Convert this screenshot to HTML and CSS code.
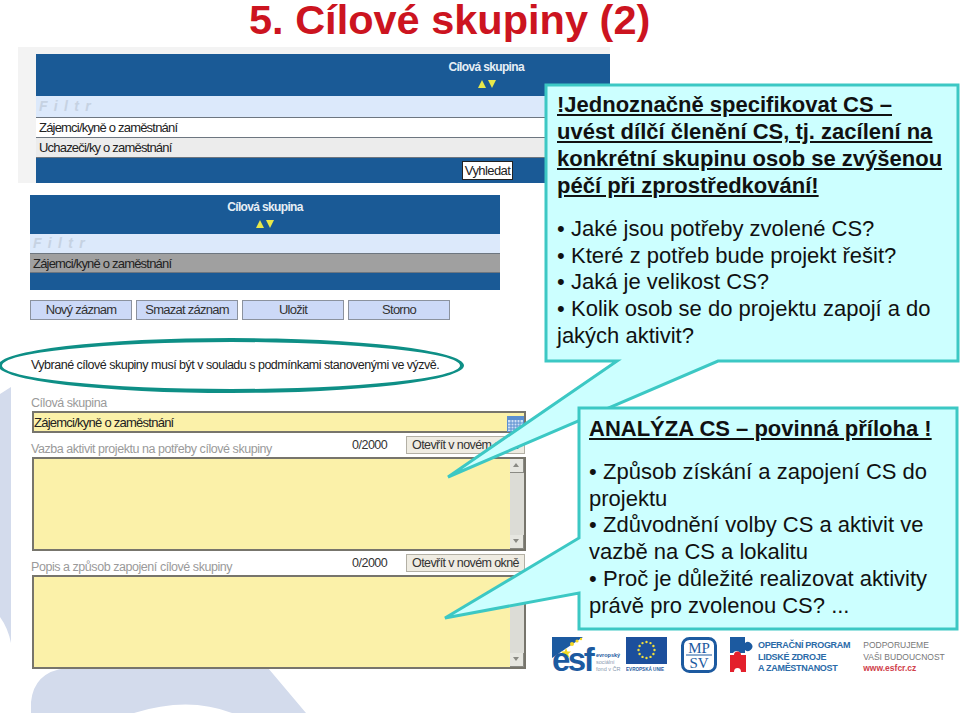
FILE: index.html
```html
<!DOCTYPE html>
<html>
<head>
    <title>5. Cílové skupiny (2)</title>
    <link rel="stylesheet" href="styles.css">
</head>
<body>
    <div class="slide">
        <!-- slide background shapes -->
        <svg class="backdrop" width="960" height="713" viewBox="0 0 960 713">
            <path d="M0,394 L11,387 V643 Q8,628 0,617 Z" fill="#d3dbec"/>
            <path d="M31,713 V702 Q34,672 66,668 H268 L306,713 H232 Q188,696 134,713 Z" fill="#d3dbec"/>
        </svg>

        <h1 class="title">5. Cílové skupiny (2)</h1>

        <div class="first-wrap">
            <div class="list list-first">
                <div class="list-head">
                    <span>Cílová skupina</span>
                    <div class="sort"><i class="up"></i><i class="down"></i></div>
                </div>
                <div class="row-filter">F i l t r</div>
                <div class="row">Zájemci/kyně o zaměstnání</div>
                <div class="row row-alt">Uchazeči/ky o zaměstnání</div>
                <div class="list-foot"><span class="search">Vyhledat</span></div>
            </div>
        </div>

        <div class="list list-second">
            <div class="list-head">
                <span>Cílová skupina</span>
                <div class="sort"><i class="up"></i><i class="down"></i></div>
            </div>
            <div class="row-filter">F i l t r</div>
            <div class="row row-selected">Zájemci/kyně o zaměstnání</div>
            <div class="list-foot"></div>
        </div>

        <div class="actions">
            <span>Nový záznam</span>
            <span>Smazat záznam</span>
            <span>Uložit</span>
            <span>Storno</span>
        </div>

        <div class="note">
            <p>Vybrané cílové skupiny musí být v souladu s podmínkami stanovenými ve výzvě.</p>
            <div class="ring"></div>
        </div>

        <div class="form">
            <div class="label">Cílová skupina</div>
            <div class="input">
                <span>Zájemci/kyně o zaměstnání</span>
                <svg class="calendar" width="17" height="16" viewBox="0 0 17 16">
                    <rect width="17" height="16" fill="#5b8fd0"/>
                    <rect x="1" y="4" width="15" height="11" fill="#cfe0f5"/>
                    <path d="M1,7H16M1,10H16M1,13H16M4,4V15M7,4V15M10,4V15M13,4V15" stroke="#5b8fd0" fill="none"/>
                </svg>
            </div>

            <div class="field-head">
                <div class="label">Vazba aktivit projektu na potřeby cílové skupiny</div>
                <div class="count">0/2000</div>
                <div class="open">Otevřít v novém okně</div>
            </div>
            <div class="area">
                <div class="scroll"><b class="arrow-up"></b><b class="arrow-down"></b></div>
            </div>

            <div class="field-head">
                <div class="label">Popis a způsob zapojení cílové skupiny</div>
                <div class="count">0/2000</div>
                <div class="open">Otevřít v novém okně</div>
            </div>
            <div class="area">
                <div class="scroll"><b class="arrow-up"></b><b class="arrow-down"></b></div>
            </div>
        </div>

        <!-- callouts -->
        <svg class="bubble" width="960" height="713" viewBox="0 0 960 713">
            <path d="M546,85 H958 V361 H718 L448,477 L617,361 H546 Z" fill="#ccffff" stroke="#3cc8c4" stroke-width="3"/>
        </svg>
        <div class="callout callout-top">
            <h2>!Jednoznačně specifikovat CS – uvést dílčí členění CS, tj. zacílení na konkrétní skupinu osob se zvýšenou péčí při zprostředkování!</h2>
            <ul>
                <li>Jaké jsou potřeby zvolené CS?</li>
                <li>Které z potřeb bude projekt řešit?</li>
                <li>Jaká je velikost CS?</li>
                <li class="wrap">Kolik osob se do projektu zapojí a do jakých aktivit?</li>
            </ul>
        </div>

        <svg class="bubble" width="960" height="713" viewBox="0 0 960 713">
            <path d="M579,408 H957 V629 H579 V593 L445,618 L579,538 Z" fill="#ccffff" stroke="#3cc8c4" stroke-width="3"/>
        </svg>
        <div class="callout callout-bottom">
            <h2>ANALÝZA CS – povinná příloha !</h2>
            <ul>
                <li class="wrap">Způsob získání a zapojení CS do projektu</li>
                <li class="wrap">Zdůvodnění volby CS a aktivit ve vazbě na CS a lokalitu</li>
                <li class="wrap">Proč je důležité realizovat aktivity právě pro zvolenou CS? ...</li>
            </ul>
        </div>

        <!-- logos -->
        <div class="logos">
            <svg class="logo-esf" width="70" height="44" viewBox="0 0 70 44">
                <path d="M0,1 H31 L0,22 Z" fill="#1c5aa0"/>
                <path d="M14,12 l1.4,3.4 3.6,.2 -2.8,2.3 .9,3.5 -3.1,-2 -3.1,2 .9,-3.5 -2.8,-2.3 3.6,-.2 Z" fill="#f6d723"/>
                <circle cx="20" cy="8" r="2" fill="#f6d723"/>
                <circle cx="25" cy="5" r="1.6" fill="#f6d723"/>
                <circle cx="29" cy="3" r="1.2" fill="#f6d723"/>
                <text x="0" y="35" class="esf-word">esf</text>
                <text x="44" y="21" class="esf-small esf-strong">evropský</text>
                <text x="44" y="28" class="esf-small">sociální</text>
                <text x="44" y="35" class="esf-small">fond v ČR</text>
            </svg>
            <svg class="logo-eu" width="42" height="38" viewBox="0 0 42 38">
                <rect x="0" y="1" width="41" height="27" fill="#1c4f9c"/>
                <g fill="#f3e03b">
                    <circle cx="20.500" cy="6" r="1.2"/><circle cx="24.500" cy="7.100" r="1.2"/><circle cx="27.400" cy="10" r="1.2"/>
                    <circle cx="28.500" cy="14" r="1.2"/><circle cx="27.400" cy="18" r="1.2"/><circle cx="24.500" cy="20.900" r="1.2"/>
                    <circle cx="20.500" cy="22" r="1.2"/><circle cx="16.500" cy="20.900" r="1.2"/><circle cx="13.600" cy="18" r="1.2"/>
                    <circle cx="12.500" cy="14" r="1.2"/><circle cx="13.600" cy="10" r="1.2"/><circle cx="16.500" cy="7.100" r="1.2"/>
                </g>
                <text x="0" y="35" class="eu-word">EVROPSKÁ UNIE</text>
            </svg>
            <svg class="logo-mpsv" width="36" height="37" viewBox="0 0 36 37">
                <rect x="1.500" y="2.500" width="33" height="33" rx="7" fill="#fff" stroke="#1c5aa0" stroke-width="3"/>
                <path d="M5,19H31" stroke="#1c5aa0"/>
                <text x="18" y="17" class="mpsv-word">MP</text>
                <text x="18" y="32" class="mpsv-word">SV</text>
            </svg>
            <svg class="logo-puzzle" width="24" height="37" viewBox="0 0 24 37">
                <path d="M0,1 H15 V7 A4.500,4.500 0 1 1 15,14 V17 H10 A4,4 0 0 0 3,17 H0 Z" fill="#1c5aa0"/>
                <path d="M0,36 V19 H4 A3.500,3.500 0 0 1 11,19 H16 V36 H11 A3.500,4 0 0 0 4,36 Z" fill="#e3202c"/>
            </svg>
            <div class="op-text">OPERAČNÍ PROGRAM<br>LIDSKÉ ZDROJE<br>A ZAMĚSTNANOST</div>
            <div class="support">PODPORUJEME<br>VAŠI BUDOUCNOST<br><span>www.esfcr.cz</span></div>
        </div>
    </div>
</body>
</html>
```

FILE: styles.css
```css
body {
    margin: 0;
    background-color: #fff;
    font-family: "Liberation Sans", Arial, sans-serif;
}
.slide {
    position: relative;
    width: 960px;
    height: 713px;
    overflow: hidden;
    background-color: #fff;
}
.backdrop, .bubble {
    position: absolute;
    left: 0;
    top: 0;
}
.title {
    position: relative;
    margin: 0;
    height: 47px;
    padding-left: 249px;
    font-size: 41.500px;
    line-height: 40px;
    font-weight: bold;
    color: #cc1420;
    white-space: nowrap;
}

/* screenshots of the list */
.first-wrap {
    position: relative;
    width: 574px;
    margin-left: 18px;
    padding: 7px 0 0 18px;
    background-color: #f3f3f3;
}
.list {
    color: #222;
    font-size: 13px;
    background-color: #1a5a96;
}
.list-second {
    position: relative;
    width: 470px;
    margin: 12px 0 0 30px;
}
.list-head {
    color: #e6eef5;
    font-weight: bold;
    font-size: 12px;
    letter-spacing: -0.65px;
    text-align: center;
}
.list-first .list-head {
    height: 42px;
    padding: 6px 86px 0 0;
    box-sizing: border-box;
    text-align: right;
}
.list-second .list-head {
    height: 39px;
    padding-top: 5px;
    box-sizing: border-box;
}
.sort {
    display: flex;
    justify-content: center;
    gap: 2px;
    margin-top: 6px;
}
.list-first .sort {
    justify-content: flex-end;
    margin-right: 28px;
}
.sort i {
    width: 0;
    height: 0;
    border-left: 4px solid transparent;
    border-right: 4px solid transparent;
}
.sort .up {
    border-bottom: 8px solid #e8e84a;
}
.sort .down {
    border-top: 8px solid #e8e84a;
}
.row-filter {
    height: 21px;
    line-height: 21px;
    padding-left: 3px;
    background-color: #dce9fb;
    border-bottom: 1px solid #6d7680;
    color: #c6d2e2;
    font-style: italic;
    font-weight: bold;
    font-size: 14px;
    letter-spacing: 1.2px;
}
.list-second .row-filter {
    height: 19px;
    line-height: 19px;
}
.row {
    height: 19px;
    line-height: 19px;
    padding-left: 3px;
    background-color: #fff;
    border-bottom: 1px solid #6d7680;
    letter-spacing: -0.8px;
}
.row-alt {
    background-color: #ececec;
}
.row-selected {
    height: 18px;
    background-color: #a0a0a0;
}
.list-foot {
    display: flex;
    justify-content: flex-end;
    align-items: center;
    height: 25px;
    padding-right: 97px;
}
.list-second .list-foot {
    height: 17px;
}
.search {
    width: 49px;
    height: 17px;
    line-height: 17px;
    text-align: center;
    background-color: #fff;
    border: 1px solid #222;
    font-size: 13px;
    letter-spacing: -0.6px;
}
.actions {
    position: relative;
    display: flex;
    gap: 4px;
    margin: 10px 0 0 30px;
}
.actions span {
    width: 100px;
    height: 18px;
    line-height: 18px;
    text-align: center;
    background-color: #ccd9f7;
    border: 1px solid #8b929e;
    font-size: 13px;
    letter-spacing: -0.75px;
    color: #333;
}
.note {
    position: relative;
    height: 75px;
}
.note p {
    margin: 0;
    padding: 37px 0 0 31px;
    font-size: 12.500px;
    line-height: 16px;
    letter-spacing: -0.5px;
    color: #222;
}
.ring {
    position: absolute;
    left: -2px;
    top: 18px;
    width: 458px;
    height: 47px;
    border: 4px solid #0e8f86;
    border-radius: 50%;
}

/* form */
.form {
    position: relative;
    width: 494px;
    margin: 0 0 0 32px;
}
.label {
    margin-left: -1px;
    font-size: 12.500px;
    line-height: 16px;
    color: #9a9a9a;
    letter-spacing: -0.45px;
}
.input {
    display: flex;
    justify-content: space-between;
    align-items: center;
    height: 18px;
    background-color: #fbf1a9;
    border: 2px solid #77756c;
    font-size: 13px;
    letter-spacing: -0.75px;
    color: #222;
}
.calendar {
    margin-top: 3px;
}
.field-head {
    display: flex;
    align-items: flex-end;
    height: 24px;
}
.field-head .label {
    flex: 1;
}
.count {
    width: 54px;
    font-size: 12.500px;
    line-height: 18px;
    letter-spacing: -0.5px;
    color: #333;
    padding-bottom: 3px;
}
.open {
    width: 117px;
    height: 16px;
    line-height: 16px;
    margin-right: 1px;
    margin-bottom: 3px;
    text-align: center;
    background-color: #efece2;
    border: 1px solid #b3b0a5;
    font-size: 12.500px;
    letter-spacing: -0.6px;
    color: #333;
    white-space: nowrap;
    overflow: hidden;
}
.area {
    display: flex;
    justify-content: flex-end;
    height: 90px;
    background-color: #fbf1a9;
    border: 2px solid #77756c;
}
.scroll {
    display: flex;
    flex-direction: column;
    justify-content: space-between;
    width: 14px;
    background-color: #dcdcd6;
}
.scroll b {
    display: block;
    height: 14px;
    background-color: #e6e6e0;
    border-right: 1px solid #8a8a84;
    border-bottom: 1px solid #8a8a84;
    box-sizing: border-box;
    position: relative;
}
.scroll b::after {
    content: "";
    position: absolute;
    left: 3px;
    top: 4px;
    border-left: 3px solid transparent;
    border-right: 3px solid transparent;
}
.arrow-up::after {
    border-bottom: 4px solid #8a8a84;
}
.arrow-down::after {
    border-top: 4px solid #8a8a84;
}

/* callout text */
.callout {
    position: absolute;
    color: #111;
    font-size: 22px;
    line-height: 26.700px;
}
.callout h2 {
    margin: 0;
    font-size: 22px;
    line-height: 27px;
    font-weight: bold;
    text-decoration: underline;
}
.callout ul {
    list-style: none;
    margin: 17px 0 0;
    padding: 0;
}
.callout li {
    padding-left: 14px;
    position: relative;
}
.callout li::before {
    content: "•";
    position: absolute;
    left: 0;
}
.callout li.wrap {
    padding-left: 0;
    text-indent: 14px;
}
.callout li.wrap::before {
    text-indent: 0;
}
.callout-top {
    left: 557px;
    top: 91px;
    width: 392px;
}
.callout-bottom {
    left: 589px;
    top: 415px;
    width: 360px;
}

/* logos */
.logos {
    position: absolute;
    left: 552px;
    top: 636px;
    display: flex;
    align-items: flex-start;
}
.logos svg {
    display: block;
}
.logo-eu {
    margin-left: 4px;
}
.logo-mpsv {
    margin-left: 13px;
}
.logo-puzzle {
    margin-left: 13px;
}
.esf-word {
    font-weight: bold;
    font-size: 33px;
    letter-spacing: -2.500px;
    fill: #1c5aa0;
}
.esf-small {
    font-size: 5.500px;
    fill: #8a9ab0;
}
.esf-strong {
    font-weight: bold;
    fill: #1c5aa0;
}
.eu-word {
    font-size: 4.600px;
    font-weight: bold;
    fill: #1c5aa0;
}
.mpsv-word {
    font-family: "Liberation Serif", serif;
    font-size: 15px;
    text-anchor: middle;
    fill: #1c5aa0;
}
.op-text {
    margin: 4px 0 0 4px;
    font-size: 9px;
    line-height: 11.500px;
    font-weight: bold;
    letter-spacing: -0.3px;
    color: #2a6aa8;
    white-space: nowrap;
}
.support {
    margin: 4px 0 0 13px;
    font-size: 8.500px;
    line-height: 11.500px;
    color: #777;
    white-space: nowrap;
}
.support span {
    color: #d0404a;
    font-weight: bold;
}
```
